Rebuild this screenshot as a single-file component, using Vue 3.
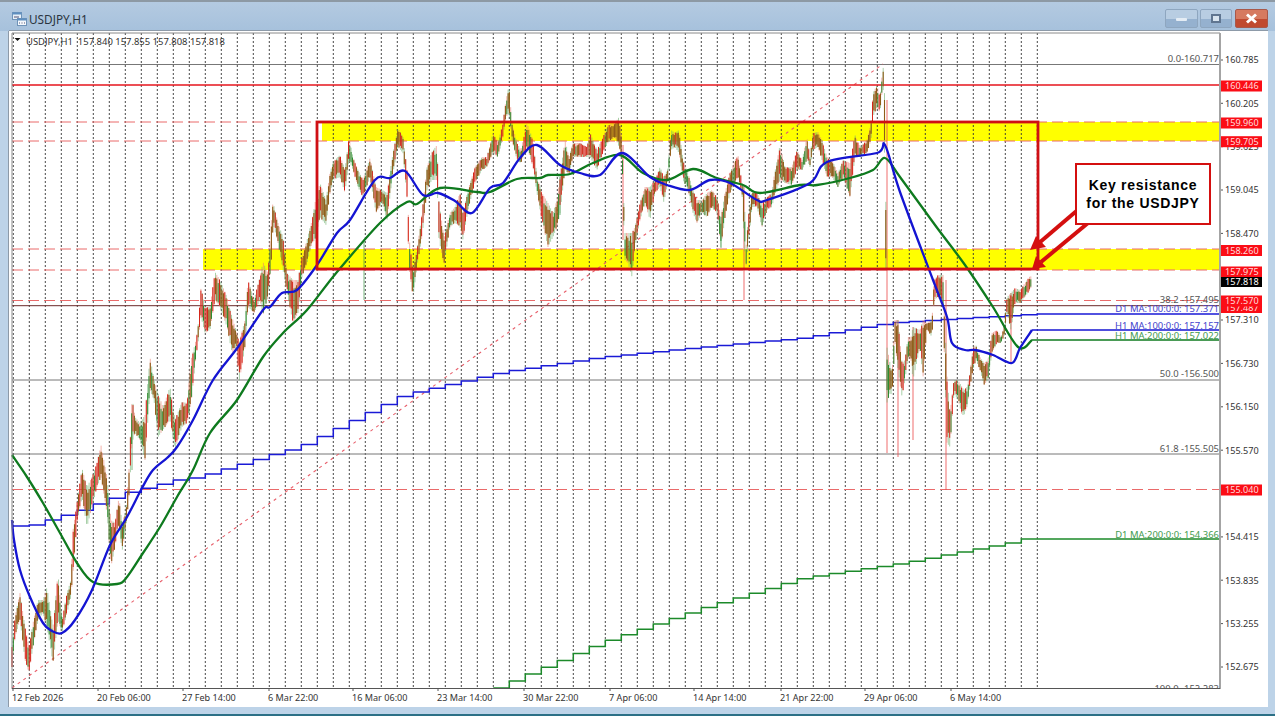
<script setup>
// hi/lo envelope of the H1 candles, read off the chart: x,high,low
const keys = `12,647,667 15,617,637 20,593,620 25,627,660 29,647,673 33,623,647 38,600,620 43,600,613 47,587,627 53,627,663 58,573,620 62,620,633 67,593,613 71,580,597 73,530,573 77,503,523 82,468,497 87,487,527 92,477,507 97,463,487 101,445,477 107,477,513 111,520,567 115,523,547 119,497,523 122,523,552 126,510,527 129,470,497 132,397,443 135,417,433 140,423,440 145,415,460 150,357,390 154,380,400 158,393,437 163,407,430 170,387,420 175,420,450 182,402,427 187,403,423 191,360,403 196,340,357 198,327,343 201,287,317 205,307,333 210,307,330 215,272,300 220,280,307 227,297,327 232,317,353 237,333,347 239,343,383 245,320,347 248,280,307 254,300,313 260,277,300 263,262,315 268,273,297 272,210,253 273,202,223 278,223,243 283,237,270 287,273,293 293,280,323 298,280,313 302,257,277 307,240,263 312,220,243 315,203,240 320,183,217 326,200,225 330,173,193 333,162,180 340,155,177 345,170,193 349,137,160 353,157,170 358,170,187 363,180,198 370,158,177 376,187,213 382,190,203 387,193,220 393,153,173 398,128,147 403,137,153 407,170,197 409,237,267 413,270,297 418,243,260 422,213,237 427,167,190 432,152,180 437,145,180 439,203,240 444,237,265 450,213,227 455,207,223 460,193,227 463,213,240 468,190,210 475,167,183 482,157,170 487,157,167 493,133,153 498,143,157 503,123,137 506,100,117 509,85,113 512,123,140 517,143,160 521,150,163 527,123,147 533,140,167 537,177,193 542,193,220 548,203,247 553,213,237 557,200,227 560,177,213 565,140,170 569,157,175 573,143,157 580,143,157 587,147,157 590,133,157 597,150,170 603,137,153 608,125,143 615,123,137 619,117,147 622,140,157 624,210,233 625,233,260 628,233,263 632,233,277 635,227,247 640,203,220 645,187,203 650,187,220 655,180,193 660,167,187 664,177,203 668,168,180 671,130,150 675,133,147 679,130,153 683,160,180 688,173,190 693,190,213 697,200,223 702,200,213 707,193,217 712,190,207 717,197,213 721,217,248 725,193,217 730,173,193 735,160,183 738,155,177 742,183,193 744,187,240 746,247,267 748,220,247 752,190,207 757,193,207 762,203,227 767,197,210 772,193,207 774,177,197 780,145,180 785,167,183 792,167,185 797,150,170 802,160,170 807,137,160 810,157,167 813,133,150 818,132,147 822,140,160 827,157,177 832,160,177 838,173,187 843,160,177 850,163,197 855,135,157 860,147,157 867,140,153 871,123,140 873,93,117 877,85,107 880,97,113 883,65,83 885,103,177 887,347,403 890,363,393 892,373,395 895,320,343 898,320,370 902,363,397 905,360,380 908,337,357 911,337,360 913,327,380 920,330,347 923,320,377 927,323,330 932,320,337 934,280,300 938,275,297 943,275,307 947,377,443 950,413,447 954,380,393 958,380,400 962,387,415 964,390,415 967,387,407 970,373,387 973,347,370 976,345,360 980,357,370 984,363,385 988,360,380 992,333,353 997,330,343 1001,337,343 1004,327,337 1007,297,313 1011,293,330 1015,288,303 1020,290,303 1025,283,297 1030,276,290 1032,277,285`
  .split(' ').map(s => s.split(',').map(Number))

function lerp(pts, x, a = 1) {
  for (let i = 1; i < pts.length; i++) {
    if (x <= pts[i][0]) {
      const t = (x - pts[i - 1][0]) / (pts[i][0] - pts[i - 1][0])
      return pts[i - 1][a] + (pts[i][a] - pts[i - 1][a]) * t
    }
  }
  return pts[pts.length - 1][a]
}

const bars = { red: '', brown: '', green: '', wickRed: '', wickGreen: '' }
for (let i = 0, x = 12; x <= 1032; i++, x += 1.33) {
  const hi = lerp(keys, x, 1)
  const lo = lerp(keys, x, 2)
  const n = Math.abs(Math.sin(i * 12.9898) * 43758.5453) % 1
  const m = Math.abs(Math.sin(i * 78.233) * 12543.853) % 1
  const top = hi + (lo - hi) * 0.25 * n
  const bot = lo - (lo - hi) * 0.25 * m
  const px = x.toFixed(1)
  const seg = `M${px} ${top.toFixed(1)}V${bot.toFixed(1)}`
  const wick = `M${px} ${hi.toFixed(1)}V${lo.toFixed(1)}`
  if (n < 0.3) bars.red += seg
  else if (n < 0.8) bars.brown += seg
  else bars.green += seg
  if (m < 0.5) bars.wickRed += wick
  else bars.wickGreen += wick
}

// long single wicks that stick out of the body of the price action
const spikes = [
  [887, 100, 453], [946, 280, 490], [898, 320, 457], [913, 327, 440],
  [744, 187, 300], [623, 145, 240], [1011, 293, 363],
]
const thinSpikes = [[721, 217, 248], [132, 420, 470], [364, 240, 300], [560, 177, 215]]

// catmull-rom through the points read off the chart, so the averages stay round
function smooth(str) {
  const p = str.split(' ').map(s => s.split(',').map(Number))
  let d = `M${p[0][0]} ${p[0][1]}`
  for (let i = 0; i < p.length - 1; i++) {
    const a = p[Math.max(i - 1, 0)]
    const b = p[i]
    const c = p[i + 1]
    const e = p[Math.min(i + 2, p.length - 1)]
    const c1x = b[0] + (c[0] - a[0]) / 6
    const c1y = b[1] + (c[1] - a[1]) / 6
    const c2x = c[0] - (e[0] - b[0]) / 6
    const c2y = c[1] - (e[1] - b[1]) / 6
    d += `C${c1x.toFixed(1)} ${c1y.toFixed(1)} ${c2x.toFixed(1)} ${c2y.toFixed(1)} ${c[0]} ${c[1]}`
  }
  return d
}

const blue = smooth('12,520 14,540 20,570 30,597 43,623 52,631 62,633 75,620 92,590 110,545 127,517 142,488 153,470 167,458 177,447 193,420 213,380 238,347 263,310 270,307 282,293 297,290 317,265 337,233 350,220 375,180 390,178 405,171 423,195 438,193 455,201 472,213 490,188 503,183 520,158 537,145 560,165 580,173 600,175 622,153 650,177 667,185 690,190 710,180 730,183 757,200 767,200 810,183 827,162 877,153 885,145 900,192 933,280 947,317 952,343 965,350 975,350 993,355 1012,363 1020,348 1032,330')
const green = smooth('12,455 27,477 43,503 60,533 77,563 93,582 117,584 127,577 143,553 160,527 177,497 193,470 210,433 237,400 263,357 283,333 307,310 337,272 380,223 407,202 417,204 440,188 477,192 490,192 517,179 540,178 548,175 570,174 593,163 620,155 643,173 667,180 693,169 717,178 743,185 760,193 800,185 817,185 850,178 873,170 885,158 900,177 935,225 965,265 993,307 1018,347 1032,340')

function stepped(pts, from) {
  let s = ''
  let prev = null
  for (let x = from; x <= 1037.3; x += 16) {
    const y = lerp(pts, x).toFixed(1)
    s += prev === null ? `${x},${y} ` : `${x},${prev} ${x},${y} `
    prev = y
  }
  return s + `1220,${prev}`
}
const d1Blue = stepped([[13, 526], [30, 525], [45, 520], [62, 515], [78, 510], [93, 504], [110, 498], [126, 492], [142, 488], [158, 484], [173, 480], [189, 478], [205, 474], [268, 455], [285, 450], [300, 445], [400, 395], [500, 372], [600, 357], [700, 347], [800, 338], [885, 323], [1000, 316], [1037, 314]], 13.3)
const d1Green = stepped([[493, 688], [600, 642], [700, 608], [800, 578], [900, 563], [1005, 543], [1021, 539], [1037, 539]], 493.3)

const grid = Array.from({ length: 65 }, (_, k) => 13.3 + 16 * k)
// 157.890 and 154.990 sit fully under a price tag on the scale, so they are left out
const prices = [
  [60, '160.785'], [103.3, '160.205'], [146.7, '159.625'], [190, '159.045'], [233.4, '158.470'],
  [320, '157.310'], [363.4, '156.730'], [406.8, '156.150'], [450.2, '155.570'],
  [536.9, '154.415'], [580.2, '153.835'], [623.6, '153.255'], [667, '152.675'],
]

const tags = [
  { y: 86, t: '160.446' }, { y: 123, t: '159.960' }, { y: 141.7, t: '159.705' },
  { y: 250.5, t: '158.260' }, { y: 272, t: '157.975' }, { y: 307.5, t: '157.487' },
  { y: 301, t: '157.570' }, { y: 490, t: '155.040' },
]

const labels = [
  { y: 62, t: '0.0-160.717', c: 'lab' }, { y: 303, t: '38.2 -157.495', c: 'lab' },
  { y: 312, t: 'D1 MA:100:0:0: 157.371', c: 'lab-blue' }, { y: 329, t: 'H1 MA:100:0:0: 157.157', c: 'lab-blue' },
  { y: 339, t: 'H1 MA:200:0:0: 157.022', c: 'lab-green' }, { y: 377, t: '50.0 -156.500', c: 'lab' },
  { y: 452, t: '61.8 -155.505', c: 'lab' }, { y: 538, t: 'D1 MA:200:0:0: 154.366', c: 'lab-green' },
  { y: 692, t: '100.0 -152.283', c: 'lab' },
]

const dates = [
  [12, '12 Feb 2026'], [97, '20 Feb 06:00'], [182, '27 Feb 14:00'], [268, '6 Mar 22:00'],
  [352, '16 Mar 06:00'], [437, '23 Mar 14:00'], [523, '30 Mar 22:00'], [609, '7 Apr 06:00'],
  [693, '14 Apr 14:00'], [780, '21 Apr 22:00'], [864, '29 Apr 06:00'], [950, '6 May 14:00'],
]

const info = 'USDJPY,H1  157.840 157.855 157.808 157.818'
</script>

<template>
  <div class="window">
    <header class="titlebar">
      <svg class="app-icon" width="15" height="14" viewBox="0 0 15 14">
        <rect x="0.5" y="0.5" width="9" height="7" fill="#e8f0f8" stroke="#6f93b8" />
        <rect x="0.5" y="0.5" width="9" height="2" fill="#5f8fc0" />
        <rect x="5.5" y="6.5" width="9" height="7" fill="#f4f8fc" stroke="#6f93b8" />
        <rect x="5.5" y="6.5" width="9" height="2" fill="#5f8fc0" />
        <path d="M2 5h5M7 11h1M9.500 11h1M12 11h1" stroke="#557" />
      </svg>
      <span class="title">USDJPY,H1</span>
      <div class="controls">
        <div class="btn wide">
          <span class="min-glyph" />
        </div>
        <div class="btn">
          <span class="max-glyph" />
        </div>
        <div class="btn close">
          <svg width="13" height="11" viewBox="0 0 13 11">
            <path d="M2 1.500l9 8M11 1.500l-9 8" stroke="#fff" stroke-width="3" />
          </svg>
        </div>
      </div>
    </header>

    <main class="client">
      <svg class="chart" width="1259" height="676" viewBox="9 31 1259 676">
        <defs>
          <clipPath id="plot">
            <rect x="12" y="33" width="1208" height="655" />
          </clipPath>
        </defs>

        <rect class="band" x="322" y="122" width="898" height="19" />
        <rect class="band" x="203" y="249" width="1017" height="21" />

        <line v-for="x in grid" :key="x" class="grid" :x1="x" :x2="x" y1="33" y2="688" />

        <line class="fib" x1="12" x2="1220" y1="64.500" y2="64.500" />
        <line class="fib" x1="12" x2="1220" y1="380" y2="380" />
        <line class="fib" x1="12" x2="1220" y1="454" y2="454" />
        <line class="fib-diag" x1="12" y1="688" x2="883" y2="64" />

        <line class="level" x1="12" x2="1220" y1="85" y2="85" />
        <line v-for="y in [122, 141, 249, 270, 300.5, 489.5]" :key="y" class="dash" x1="12" x2="1220" :y1="y" :y2="y" />
        <line class="dark-level" x1="12" x2="1220" y1="305.700" y2="305.700" />

        <polyline class="d1-blue" :points="d1Blue" fill="none" />
        <polyline class="d1-green" :points="d1Green" fill="none" />

        <line v-for="s in spikes" :key="s[0]" class="spike" :x1="s[0]" :x2="s[0]" :y1="s[1]" :y2="s[2]" />
        <line v-for="s in thinSpikes" :key="s[0]" class="spike-thin" :x1="s[0]" :x2="s[0]" :y1="s[1]" :y2="s[2]" />
        <path class="wick-red" :d="bars.wickRed" />
        <path class="wick-green" :d="bars.wickGreen" />
        <path class="body-green" :d="bars.green" />
        <path class="body-brown" :d="bars.brown" />
        <path class="body-red" :d="bars.red" />

        <path class="ma-green" :d="green" />
        <path class="ma-blue" :d="blue" />
        <line class="flat-green" x1="1032" x2="1220" y1="340" y2="340" />
        <line class="flat-blue" x1="1032" x2="1220" y1="330" y2="330" />

        <rect class="zone" x="317" y="122" width="721" height="147" />

        <text v-for="l in labels" :key="l.t" :class="['txt', 'big', l.c]" x="1219" :y="l.y" text-anchor="end" clip-path="url(#plot)">{{ l.t }}</text>

        <!-- axes -->
        <line class="frame" x1="12" x2="12" y1="33" y2="689" />
        <line class="frame" x1="12" x2="1220" y1="33" y2="33" />
        <line class="axis-y" x1="1220" x2="1220" y1="33" y2="689" />
        <line class="axis-x" x1="12" x2="1220" y1="688.500" y2="688.500" />

        <!-- price scale -->
        <g v-for="p in prices" :key="p[1]">
          <line class="tick" x1="1221" x2="1223" :y1="p[0]" :y2="p[0]" />
          <text class="txt" x="1225" :y="p[0] + 3.300">{{ p[1] }}</text>
        </g>
        <g v-for="tag in tags" :key="tag.t">
          <rect class="tag-red" x="1221" :y="tag.y - 5.500" width="41" height="11" />
          <text class="txt tag-text" x="1225" :y="tag.y + 3.300">{{ tag.t }}</text>
        </g>
        <rect class="tag-black" x="1221" y="277" width="41" height="10" />
        <text class="txt tag-text-w" x="1225" y="285.300">157.818</text>

        <!-- time scale -->
        <g v-for="d in dates" :key="d[1]">
          <line class="tick" :x1="d[0] + 1" :x2="d[0] + 1" y1="689" y2="691" />
          <text class="txt" :x="d[0]" y="701">{{ d[1] }}</text>
        </g>

        <text class="txt big" x="26" y="44.500">{{ info }}</text>
        <path class="fold" d="M14.500 38h6l-3 3z" />

        <!-- callout arrows -->
        <path class="arrow" d="M1080 208L1039 243" />
        <path class="arrow-head" d="M1030 250L1036 236L1046 247z" />
        <path class="arrow" d="M1088 223L1041 262" />
        <path class="arrow-head" d="M1032 269L1036 256L1046 267z" />
      </svg>

      <div class="callout">Key resistance<br />for the USDJPY</div>
    </main>
    <div class="taskbar" />
  </div>
</template>

<style scoped>
.window {
  width: 1275px;
  height: 716px;
  display: flex;
  flex-direction: column;
  background: #bdd3e8;
  overflow: hidden;
}

.titlebar {
  height: 31px;
  flex-shrink: 0;
  box-sizing: border-box;
  display: flex;
  align-items: center;
  padding: 0 7px 0 12px;
  border-top: 2px solid #8d99a4;
  background: linear-gradient(to bottom, #b4cae1, #a6c1dc);
}

.app-icon {
  flex-shrink: 0;
  margin-top: 5px;
}

.title {
  margin: 5px 0 0 2px;
  font: 11.800px "Noto Sans", sans-serif;
  color: #2a3440;
}

.controls {
  margin-left: auto;
  display: flex;
  gap: 2px;
  margin-top: 3px;
}

.btn {
  width: 32px;
  height: 19px;
  display: flex;
  align-items: center;
  justify-content: center;
  border: 1px solid #8ea6bf;
  border-radius: 2px;
  box-sizing: border-box;
  background: linear-gradient(to bottom, #b8cde2 0 50%, #95b1cf 50% 100%);
}

.wide {
  width: 33px;
}

.close {
  width: 33px;
  margin-left: 1px;
  border-color: #a8584a;
  background: linear-gradient(to bottom, #d67a60 0 50%, #c04a30 50% 100%);
}

.min-glyph {
  width: 11px;
  height: 3px;
  margin-top: 2px;
  background: #e4ecf4;
  border-radius: 1px;
}

.max-glyph {
  width: 10px;
  height: 9px;
  box-sizing: border-box;
  border: 2px solid #5f7590;
  background: #d8e4ef;
}

.client {
  position: relative;
  flex: 1;
  margin: 0 7px 7px 9px;
  background: #fff;
  min-height: 0;
  box-shadow: 0 -1px 0 #8d9aa8, -1px 0 0 #8d9aa8;
}

.chart {
  display: block;
}

.taskbar {
  height: 2px;
  flex-shrink: 0;
  background: #2c7086;
}

.callout {
  position: absolute;
  left: 1066px;
  top: 132px;
  width: 136px;
  height: 62px;
  box-sizing: border-box;
  border: 2px solid #d40f0f;
  background: #fff;
  display: flex;
  align-items: center;
  justify-content: center;
  text-align: center;
  font: bold 14px/18px "Liberation Sans", sans-serif;
  letter-spacing: 0.7px;
  color: #000;
}

.band { fill: #ffff00; }
.grid { stroke: #333; stroke-width: 0.9; stroke-dasharray: 2 2; }
.fib { stroke: #777; stroke-width: 1; }
.fib-diag { stroke: #e8606c; stroke-width: 1.100; stroke-dasharray: 3 4; }
.level { stroke: #e6141c; stroke-width: 1.600; }
.dash { stroke: #ea6a6a; stroke-width: 1; stroke-dasharray: 11 5; }
.dark-level { stroke: #6a2a2a; stroke-width: 1; }
.d1-blue { stroke: #1a1ad6; stroke-width: 1.500; }
.d1-green { stroke: #1c8a2a; stroke-width: 1.500; }
.spike { stroke: #ec5050; stroke-width: 1.500; opacity: 0.55; }
.spike-thin { stroke: #3f9a4a; stroke-width: 0.700; }
.wick-red { stroke: #e88070; stroke-width: 0.600; fill: none; }
.wick-green { stroke: #6fb06f; stroke-width: 0.600; fill: none; }
.body-green { stroke: #2f8a2f; stroke-width: 1; fill: none; }
.body-brown { stroke: #8f5c18; stroke-width: 1.100; fill: none; }
.body-red { stroke: #d4261a; stroke-width: 1; fill: none; }
.ma-blue { stroke: #1414d2; stroke-width: 2.300; fill: none; }
.ma-green { stroke: #0e7a1e; stroke-width: 2.300; fill: none; }
.flat-blue { stroke: #1414d2; stroke-width: 1.500; }
.flat-green { stroke: #0e7a1e; stroke-width: 1.500; }
.zone { fill: none; stroke: #cf0f14; stroke-width: 2.800; }
.frame { stroke: #8a8a8a; stroke-width: 1; }
.axis-y { stroke: #a4a4a4; stroke-width: 2; }
.axis-x { stroke: #555; stroke-width: 1; }
.tick { stroke: #555; stroke-width: 1; }
.fold { fill: #111; }
.arrow { stroke: #d40f0f; stroke-width: 4; fill: none; }
.arrow-head { fill: #d40f0f; }

.txt {
  font-family: "Noto Sans", "Liberation Sans", sans-serif;
  font-size: 9.100px;
  fill: #333;
  white-space: pre;
}

.big { font-size: 9.450px; }

.lab { fill: #555; }
.lab-blue { fill: #4343cc; }
.lab-green { fill: #3f9a4f; }
.tag-red { fill: #fb0d16; }
.tag-black { fill: #000; }
.tag-text { fill: #ffdcdc; }
.tag-text-w { fill: #fff; }
</style>

<style>
html, body {
  margin: 0;
  background: #bdd3e8;
}
</style>
